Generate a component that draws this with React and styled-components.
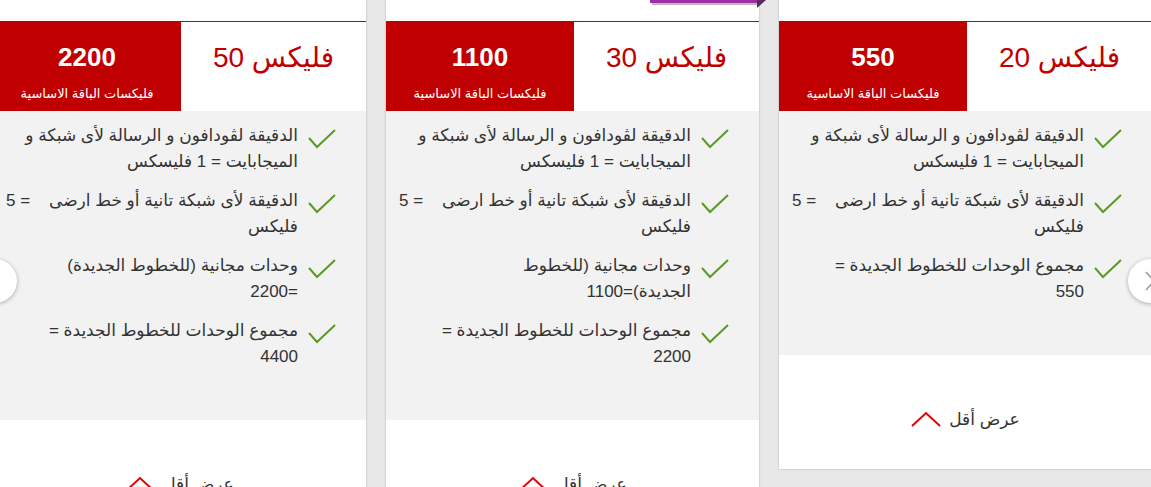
import React from "react";
import styled, { createGlobalStyle } from "styled-components";

const GlobalStyle = createGlobalStyle`
  body {
    margin: 0;
    background: #e8e8e8;
    overflow: hidden;
    font-family: "Liberation Sans", "DejaVu Sans", sans-serif;
  }
`;

// line breaks follow the original card copy
const minute = "الدقيقة لڤودافون و الرسالة لأى شبكة و\nالميجابايت = 1 فليسكس";
const other = "الدقيقة لأى شبكة تانية أو خط ارضى \u00a0\u00a0 = 5\nفليكس";

const plans = [
  {
    name: "فليكس 50",
    flex: "2200",
    features: [
      minute,
      other,
      "وحدات مجانية (للخطوط الجديدة)\n=2200",
      "مجموع الوحدات للخطوط الجديدة =\n4400",
    ],
  },
  {
    name: "فليكس 30",
    flex: "1100",
    features: [
      minute,
      other,
      "وحدات مجانية (للخطوط\nالجديدة)=1100",
      "مجموع الوحدات للخطوط الجديدة =\n2200",
    ],
  },
  {
    name: "فليكس 20",
    flex: "550",
    features: [minute, other, "مجموع الوحدات للخطوط الجديدة =\n550"],
  },
];

const Carousel = styled.div`
  position: relative;
  width: 1151px;
  height: 487px;
  overflow: hidden;
`;

const Track = styled.div`
  display: flex;
  align-items: flex-start;
  gap: 20px;
  margin-left: -7px;
`;

const Card = styled.div`
  flex-shrink: 0;
  width: 373px;
  padding-top: 21px;
  background: #fff;
  box-shadow: 0 0 2px rgba(0, 0, 0, 0.25);
`;

const Header = styled.div`
  display: flex;
  height: 89px;
  border-top: 1px solid #c00000;
`;

const TitleBox = styled.div`
  flex: 1;
  display: flex;
  align-items: center;
  justify-content: center;
  padding-bottom: 18px;
  color: #c00000;
  font-size: 28px;
`;

const PriceBox = styled.div`
  width: 188px;
  background: #c00000;
  color: #fff;
  display: flex;
  flex-direction: column;
  align-items: center;
  padding-top: 20px;
  box-sizing: border-box;
`;

const Amount = styled.div`
  font-size: 26px;
  font-weight: bold;
  line-height: 30px;
`;

const AmountLabel = styled.div`
  margin-top: 15px;
  font-size: 13px;
  line-height: 14px;
`;

const Body = styled.ul`
  list-style: none;
  margin: 0;
  background: #f2f2f2;
  padding: 12px 30px 50px 4px;
`;

const Item = styled.li`
  display: flex;
  gap: 10px;
  color: #333;
  font-size: 17px;
  line-height: 26px;
  & + & {
    margin-top: 13px;
  }
`;

const ItemText = styled.span`
  white-space: pre-line;
`;

const CheckIcon = styled.svg`
  flex-shrink: 0;
  width: 28px;
  height: 22px;
  margin-top: 5px;
`;

const Footer = styled.div`
  height: 114px;
  box-sizing: border-box;
  padding-top: 54px;
  display: flex;
  justify-content: center;
  align-items: flex-start;
  gap: 8px;
  color: #333;
  font-size: 17px;
  line-height: 22px;
`;

const NavButton = styled.div`
  position: absolute;
  top: 259px;
  ${(p) => (p.side === "left" ? "left: -27px;" : "right: -21px;")}
  width: 44px;
  height: 44px;
  border-radius: 50%;
  background: #fff;
  box-shadow: 0 1px 4px rgba(0, 0, 0, 0.3);
  display: flex;
  align-items: center;
  justify-content: center;
`;

const Ribbon = styled.svg`
  position: absolute;
  top: 0;
  left: 650px;
`;

const Check = () => (
  <CheckIcon viewBox="0 0 28 22">
    <polyline points="1,10 9,19 27,2" fill="none" stroke="#5a9a22" strokeWidth="2" />
  </CheckIcon>
);

const Chevron = ({ dir }) => (
  <svg width="14" height="20" viewBox="0 0 14 20">
    <polyline
      points={dir === "left" ? "11,1 3,10 11,19" : "3,1 11,10 3,19"}
      fill="none"
      stroke="#999"
      strokeWidth="1.5"
    />
  </svg>
);

export default function App() {
  return (
    <>
      <GlobalStyle />
      <Carousel>
        <Track>
          {plans.map((plan) => (
            <Card key={plan.name} dir="rtl">
              <Header>
                <TitleBox>{plan.name}</TitleBox>
                <PriceBox>
                  <Amount>{plan.flex}</Amount>
                  <AmountLabel>فليكسات الباقة الاساسية</AmountLabel>
                </PriceBox>
              </Header>
              <Body>
                {plan.features.map((f) => (
                  <Item key={f}>
                    <Check />
                    <ItemText>{f}</ItemText>
                  </Item>
                ))}
              </Body>
              <Footer>
                <span>عرض أقل</span>
                <svg width="30" height="16" viewBox="0 0 30 16" style={{ marginTop: 2 }}>
                  <polyline points="1,15 15,2 29,15" fill="none" stroke="#e60000" strokeWidth="2" />
                </svg>
              </Footer>
            </Card>
          ))}
        </Track>
        <NavButton side="left">
          <Chevron dir="left" />
        </NavButton>
        <NavButton side="right">
          <Chevron dir="right" />
        </NavButton>
        <Ribbon width="120" height="12" viewBox="0 0 120 12">
          <rect x="2" y="2" width="108" height="3" fill="#bdbdbd" />
          <rect x="0" y="0" width="110" height="3" fill="#9c2fa8" />
          <polygon points="107,0 116,0 107,8" fill="#5b2a5e" />
        </Ribbon>
      </Carousel>
    </>
  );
}
